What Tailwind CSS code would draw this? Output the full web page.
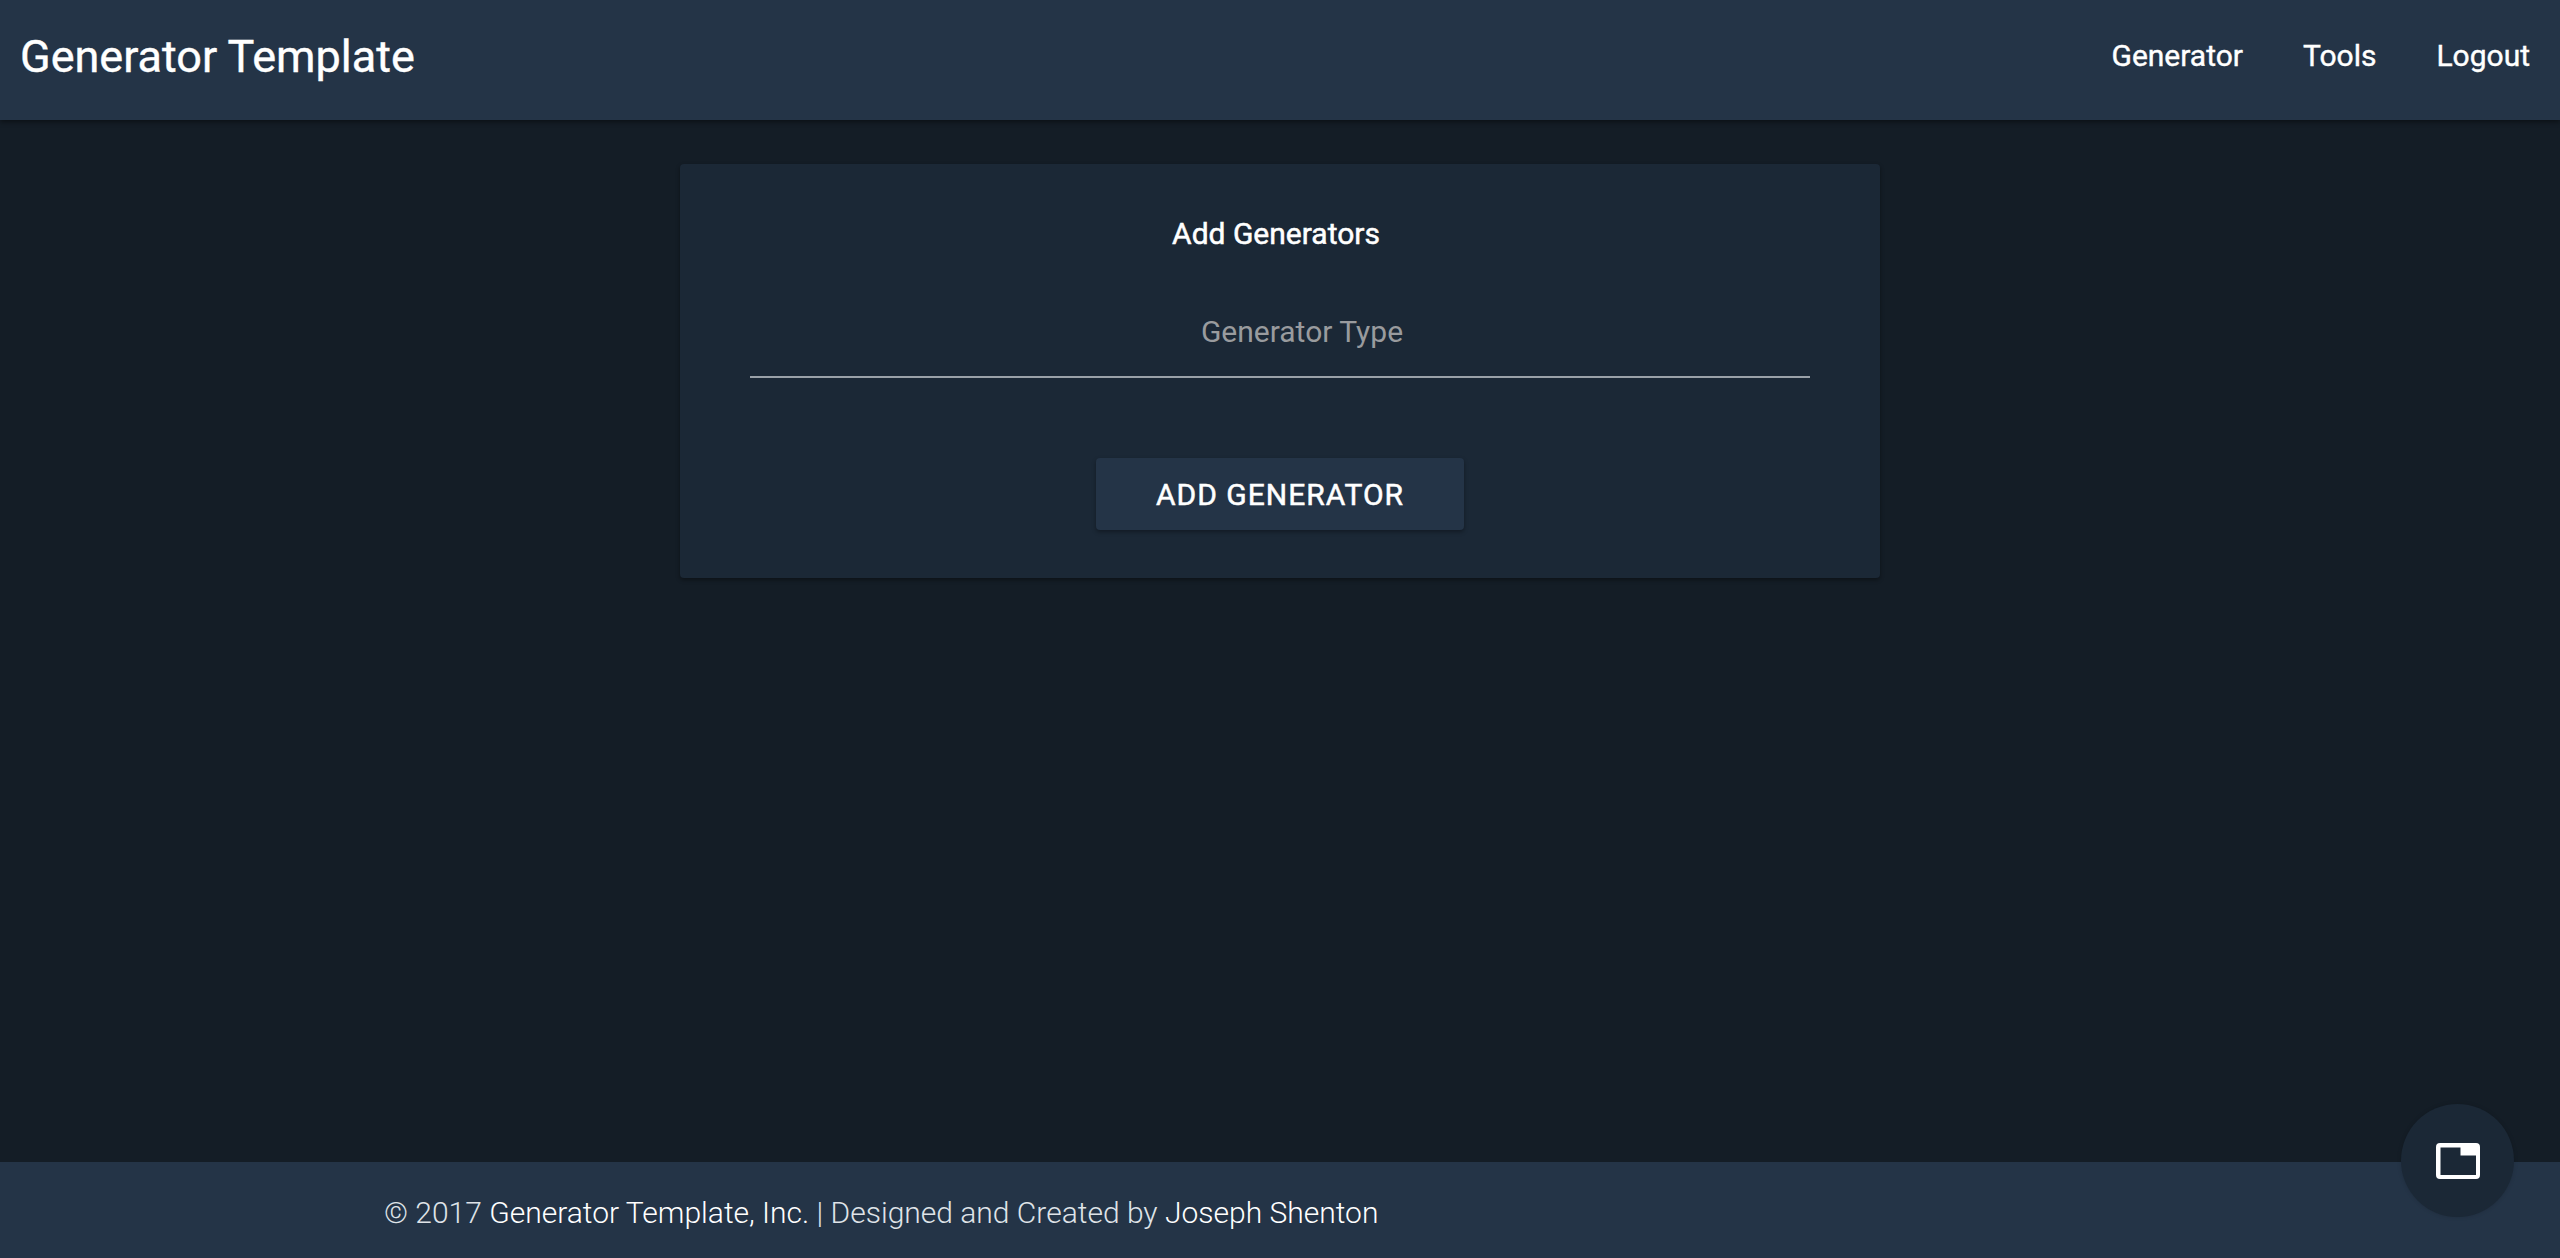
<!DOCTYPE html>
<html lang="en">
<head>
    <meta charset="UTF-8">
    <meta name="viewport" content="width=device-width, initial-scale=1.0">
    <title>Generator Template</title>
    <script src="https://cdn.jsdelivr.net/npm/@tailwindcss/browser@4"></script>
</head>
<body class="relative flex flex-col h-[1258px] overflow-hidden bg-[#141d26] font-['Roboto',sans-serif] text-white">
    <header class="flex items-center justify-between h-[120px] shrink-0 pl-5 pr-[30px] pb-2 bg-[#243447] shadow-[0_2px_5px_rgba(0,0,0,0.45)]">
        <a class="text-[45px] leading-none [-webkit-text-stroke:0.4px_white]">Generator Template</a>
        <nav class="flex gap-[60px] text-[30px] leading-none [-webkit-text-stroke:0.4px_white]">
            <a>Generator</a>
            <a>Tools</a>
            <a>Logout</a>
        </nav>
    </header>

    <main class="flex-1 flex justify-center pt-11">
        <section class="flex flex-col items-center w-[1200px] h-[414px] px-[70px] bg-[#1b2836] rounded-sm shadow-[0_2px_4px_rgba(0,0,0,0.4)]">
            <h2 class="mt-[50px] mr-2 text-[30px] leading-[40px] [-webkit-text-stroke:0.5px_white]">Add Generators</h2>
            <input type="text" placeholder="Generator Type" class="w-full h-[92px] mt-8 pl-11 text-center text-[30px] border-b-2 border-[#9aa1a8] outline-none placeholder:text-[#999b9e]">
            <button class="w-[368px] h-[72px] mt-20 bg-[#243447] rounded text-[30px] tracking-[1px] [-webkit-text-stroke:0.5px_white] shadow-[0_2px_4px_rgba(0,0,0,0.35)]">ADD GENERATOR</button>
        </section>
    </main>

    <footer class="flex items-center h-24 shrink-0 pl-[384px] pt-1 bg-[#243447] text-[30px] font-light text-[#dfe3e8]">
        <p>© 2017 <span class="text-white">Generator Template, Inc.</span> | Designed and Created by <span class="text-white">Joseph Shenton</span></p>
    </footer>

    <button class="absolute right-[46px] bottom-[41px] flex items-center justify-center size-[113px] rounded-full bg-[#1b2836] shadow-[0_0_4px_rgba(0,0,0,0.15)]">
        <svg width="44" height="36" viewBox="0 0 44 36">
            <path fill="#fff" fill-rule="evenodd" d="M4 0h36a4 4 0 0 1 4 4v28a4 4 0 0 1-4 4H4a4 4 0 0 1-4-4V4a4 4 0 0 1 4-4zm.500 4.500v27.500h35.500V12.500H24.500v-8z"/>
        </svg>
    </button>
</body>
</html>
